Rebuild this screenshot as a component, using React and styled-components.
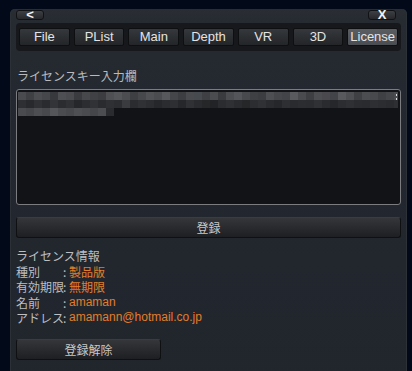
import React from "react";
import styled, { createGlobalStyle } from "styled-components";

const Global = createGlobalStyle`
  html, body { margin: 0; padding: 0; }
  body {
    background: #020a1a;
    width: 412px;
    height: 371px;
    overflow: hidden;
    font-family: "Liberation Sans", "Noto Sans CJK JP", sans-serif;
  }
`;

const Panel = styled.div`
  margin: 9px 0 0 10px;
  width: 397px;
  height: 380px;
  box-sizing: border-box;
  padding: 1px 6px 0 6px;
  border-radius: 5px 5px 0 0;
  background: linear-gradient(180deg, #2a2e34 0px, #262a31 12px, #232830 120px, #21262d 100%);
  box-shadow: inset 1px 0 0 #2c3037, inset -1px 0 0 #2c3037;
`;

const TopBar = styled.div`
  display: flex;
  justify-content: space-between;
  height: 11px;
  padding-right: 5px;
`;

const SmallButton = styled.button`
  width: 28px;
  height: 10px;
  padding: 0;
  border: 1px solid #111214;
  border-radius: 3px;
  background: linear-gradient(180deg, #3d4044 0%, #26282b 100%);
  color: #f2f2f2;
  font-family: "Liberation Sans", sans-serif;
  font-weight: bold;
  font-size: 13px;
  line-height: 8px;
  display: flex;
  align-items: center;
  justify-content: center;
  overflow: visible;
`;

const TabBar = styled.div`
  margin-top: 2px;
  height: 28px;
  box-sizing: border-box;
  padding: 5px 3px 5px 3px;
  display: flex;
  gap: 4px;
  background: #16181b;
  border-radius: 4px;
`;

const Tab = styled.button`
  flex: 1;
  height: 18px;
  padding: 0;
  border: 1px solid #0e0f11;
  border-radius: 2px;
  background: ${(p) =>
    p.$active
      ? "linear-gradient(180deg, #5a5d61 0%, #4a4d51 100%)"
      : "linear-gradient(180deg, #35383c 0%, #232528 100%)"};
  color: #e4e4e4;
  font-family: "Liberation Sans", sans-serif;
  font-size: 13px;
  line-height: 16px;
`;

const SectionLabel = styled.div`
  margin-top: 18px;
  padding-left: 1px;
  font-family: "Noto Sans CJK JP", sans-serif;
  font-size: 12px;
  line-height: 14px;
  color: #b8babd;
`;

const KeyBox = styled.div`
  margin-top: 6px;
  height: 116px;
  box-sizing: border-box;
  border: 1px solid #7a7c80;
  border-radius: 3px;
  background: #111316;
  padding: 1px 0 0 1px;
  overflow: hidden;
`;

const WideButton = styled.button`
  display: flex;
  align-items: center;
  justify-content: center;
  width: ${(p) => p.$width || "100%"};
  height: 21px;
  margin-top: ${(p) => p.$mt || 0}px;
  padding: 0;
  border: 1px solid #0f1012;
  border-top-color: #3a3c40;
  border-radius: 3px;
  background: linear-gradient(180deg, #34363a 0%, #1d1f22 100%);
  color: #c8c8c8;
  font-family: "Noto Sans CJK JP", sans-serif;
  font-size: 12px;
  box-sizing: border-box;
`;

const Info = styled.div`
  margin-top: 10px;
  font-family: "Noto Sans CJK JP", sans-serif;
  font-size: 12px;
  line-height: 15.5px;
  color: #bcbec1;
`;

const InfoRow = styled.div`
  display: flex;
  white-space: nowrap;
`;

const Key = styled.span`
  width: 47px;
`;

const Colon = styled.span`
  width: 6px;
`;

const Value = styled.span`
  color: #e27d2a;
  font-family: ${(p) => (p.$latin ? '"Liberation Sans", "Noto Sans CJK JP", sans-serif' : '"Noto Sans CJK JP", sans-serif')};
`;

const mosaic = [
  ["#4a4b4f","#3f4044","#4c4d51","#46474b","#38393d","#4e4f53","#4a4b4f","#3a3b3f","#47484c","#404145","#3c3d41","#4f5054","#55565a","#4c4d51","#3e3f43","#47484c","#515256","#4b4c50","#57585c","#45464a","#3d3e42","#4a4b4f","#474a4e","#3f4044","#4b4c50","#3a3b3f","#4c4d51","#54555a","#48494d","#3f4044","#3c3d41","#4e4f53","#46474b","#43444a","#595a5e","#4a4b4f","#3e3f43","#4d4e52","#49494e","#43444a","#58595d","#4e4f53","#3f4044","#4c4d51","#48494d","#3f4044","#45464a","#4b4c50"],
  ["#2e2f33","#28292d","#303135","#2a2b2f","#333438","#2b2c30","#303135","#26272b","#2c2d31","#313236","#2a2b2f","#2f3034","#2c2d31","#3a3b3f","#2b2c30","#303135","#2c2d31","#26272b","#2b2c30","#2e2f33","#26272b","#303135","#2a2b2f","#262729","#222326","#2b2c30","#2f3034","#2a2b2f","#262729","#2c2d31","#303135","#2a2b2f","#26272b","#2e2f33","#2a2b2f","#2c2d31","#2b2c30","#303135","#2a2b2f","#26272b","#2c2d31","#2f3034","#2b2c30","#2a2b2f","#2e2f33","#2c2d31","#2a2b2f","#2e2f33"],
  ["#4a4b4f","#45464a","#4d4e52","#48494d","#55565a","#4b4c50","#47484c","#4e4f53","#4a4b4f","#45464a","#4c4d51","#2a2b2f"],
];

function Mosaic() {
  const cell = 8;
  return (
    <svg width="380" height="26" viewBox="0 0 380 26" style={{ display: "block" }}>
      {mosaic.map((row, r) =>
        row.map((c, i) => (
          <rect key={r + "-" + i} x={i * cell} y={r * cell + 1} width={cell} height={cell} fill={c} />
        ))
      )}
      <rect x="378" y="3" width="1" height="2" fill="#ddd" />
      <rect x="378" y="7" width="1" height="2" fill="#ddd" />
    </svg>
  );
}

const tabs = ["File", "PList", "Main", "Depth", "VR", "3D", "License"];

export default function App() {
  return (
    <>
      <Global />
      <Panel>
        <TopBar>
          <SmallButton>&lt;</SmallButton>
          <SmallButton>X</SmallButton>
        </TopBar>
        <TabBar>
          {tabs.map((t) => (
            <Tab key={t} $active={t === "License"}>{t}</Tab>
          ))}
        </TabBar>
        <SectionLabel>ライセンスキー入力欄</SectionLabel>
        <KeyBox>
          <Mosaic />
        </KeyBox>
        <WideButton $mt={12}>登録</WideButton>
        <Info>
          <InfoRow>ライセンス情報</InfoRow>
          <InfoRow><Key>種別</Key><Colon>:</Colon><Value>製品版</Value></InfoRow>
          <InfoRow><Key>有効期限</Key><Colon>:</Colon><Value>無期限</Value></InfoRow>
          <InfoRow><Key>名前</Key><Colon>:</Colon><Value $latin>amaman</Value></InfoRow>
          <InfoRow><Key>アドレス</Key><Colon>:</Colon><Value $latin>amamann@hotmail.co.jp</Value></InfoRow>
        </Info>
        <WideButton $mt={13} $width="145px">登録解除</WideButton>
      </Panel>
    </>
  );
}
